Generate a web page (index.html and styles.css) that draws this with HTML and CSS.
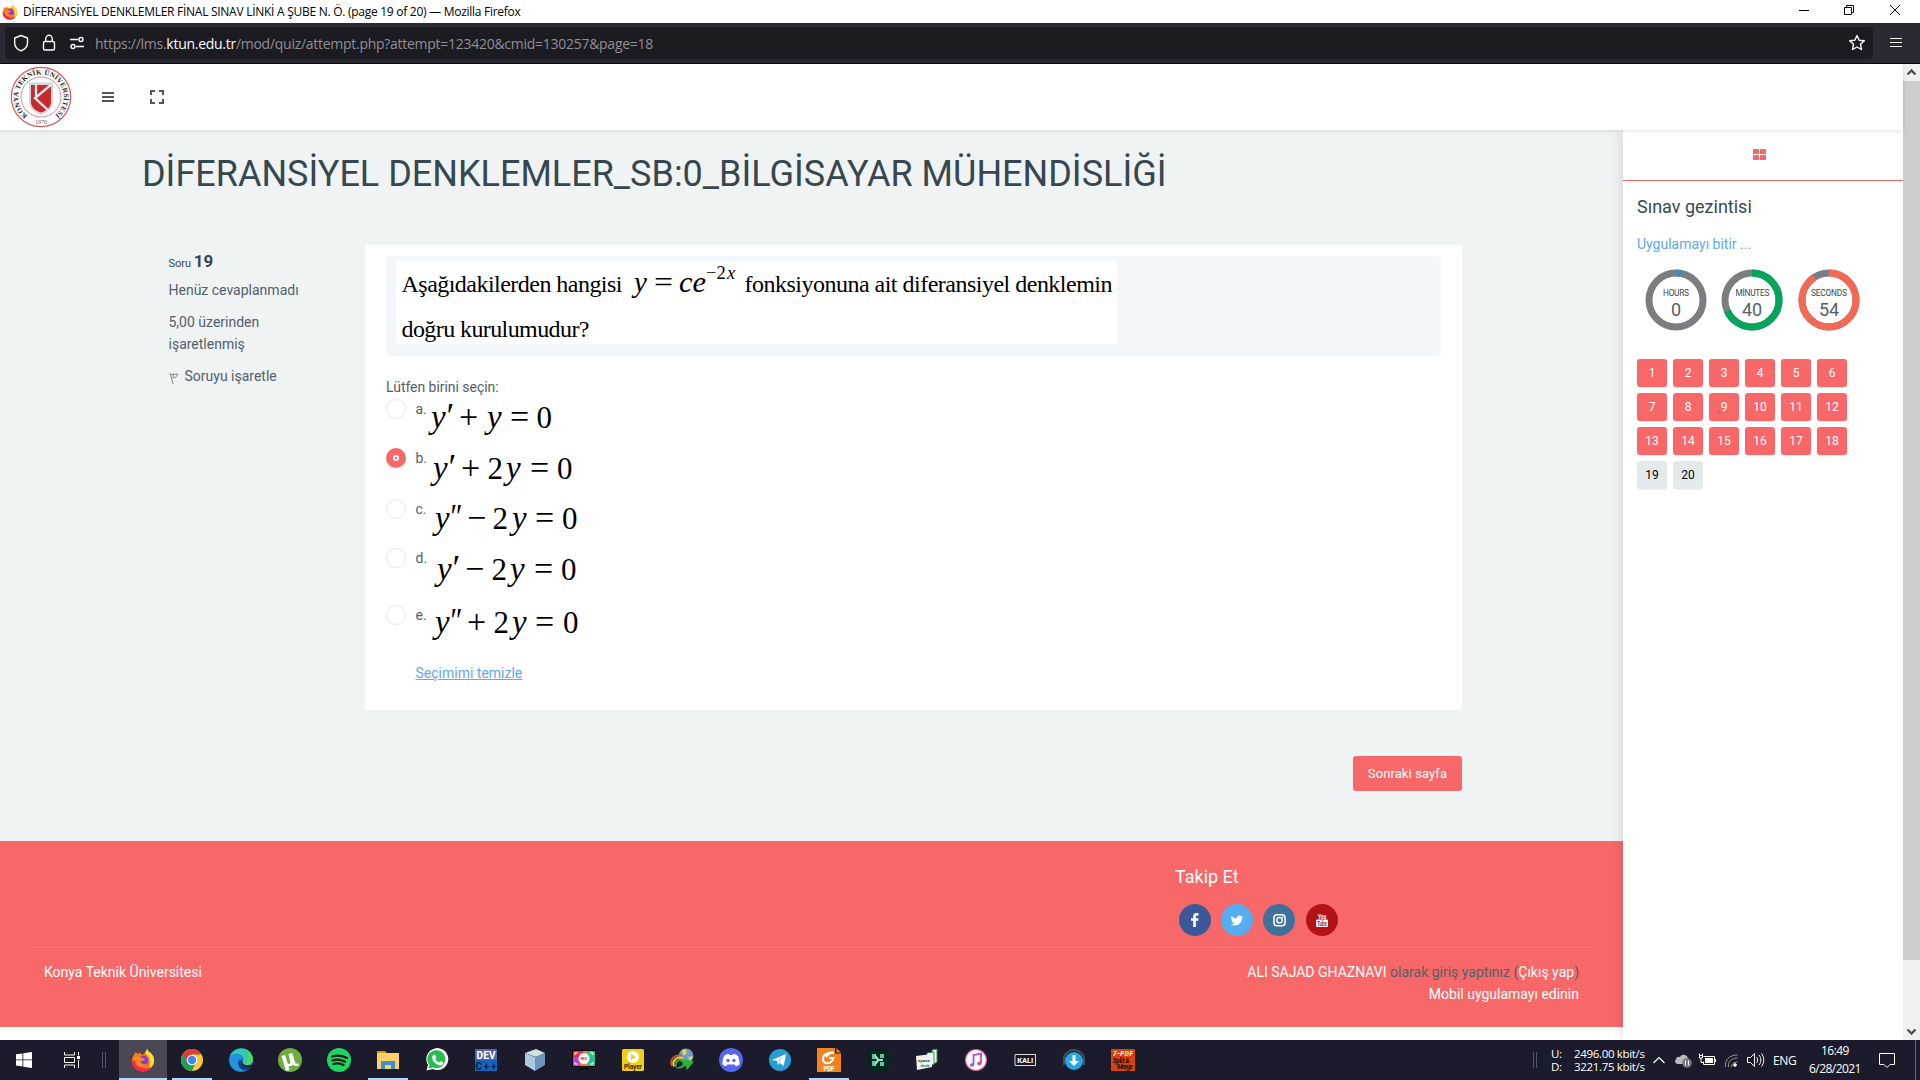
FILE: index.html
```html
<!DOCTYPE html>
<html lang="tr">
<head>
<meta charset="utf-8">
<title>DİFERANSİYEL DENKLEMLER FİNAL SINAV LİNKİ A ŞUBE N. Ö. (page 19 of 20)</title>
<link rel="stylesheet" href="styles.css">
</head>
<body>
<header class="titlebar">
  <svg class="fox" width="16" height="16" viewBox="0 0 24 24"><use href="#firefox"/></svg>
  <span class="window-title fit" data-w="497.500">DİFERANSİYEL DENKLEMLER FİNAL SINAV LİNKİ A ŞUBE N. Ö. (page 19 of 20) — Mozilla Firefox</span>
  <svg class="win-controls" width="102" height="12" viewBox="0 0 102 12" fill="none" stroke="#000"><path d="M0 6.500h10M45.500 3.500h7v7h-7zM47.500 3v-1.500h7v7h-1.500M91 1l10 10M101 1l-10 10"/></svg>
</header>
<nav class="navbar">
  <div class="urlbar">
    <svg width="70" height="20" viewBox="0 0 70 20" fill="none" stroke="#fbfbfe" stroke-width="1.4"><path d="M7 2.500L13.500 5v5c0 3.500-3 6.500-6.500 7.800C3.500 16.500.7 13.500.7 10V5z" stroke-linejoin="round"/><rect x="29.500" y="8.500" width="11" height="8.500" rx="1.500"/><path d="M31.700 8.500V6a3.300 3.700 0 0 1 6.600 0v2.500M56 6.500h8M62 13.500h8"/><circle cx="67" cy="6.500" r="2"/><circle cx="59" cy="13.500" r="2"/></svg>
    <span class="url fit" data-w="558">https://lms.<b>ktun.edu.tr</b>/mod/quiz/attempt.php?attempt=123420&amp;cmid=130257&amp;page=18</span>
    <svg class="star" width="18" height="18" viewBox="0 0 18 18" fill="none" stroke="#fbfbfe" stroke-width="1.400" stroke-linejoin="round"><path d="M9 1.500l2.200 4.700 5.100.6-3.800 3.500 1 5.200L9 13l-4.500 2.500 1-5.200L1.700 6.800l5.100-.6z"/></svg>
  </div>
  <svg class="menu" width="12" height="10" viewBox="0 0 12 10" stroke="#fbfbfe"><path d="M0 .5h12M0 4.500h12M0 8.500h12"/></svg>
</nav>
<div class="viewport">
  <div class="page">
    <header class="site-header">
      <svg class="logo" width="62" height="62" viewBox="0 0 62 62">
        <circle cx="31" cy="31" r="29.700" fill="#fff" stroke="#d4595f" stroke-width="1.200"/><circle cx="31" cy="31" r="20" fill="none" stroke="#dd8c90"/>
        <path id="ring" d="M17.500 49.500A22.800 22.800 0 1 1 44.500 49.500" fill="none"/>
        <text class="logo-text"><textPath href="#ring" textLength="113">KONYA TEKNİK ÜNİVERSİTESİ</textPath></text>
        <text class="logo-year" x="31" y="58" text-anchor="middle">1970</text>
        <path d="M19 16.500h24v19c0 7-5 11-12 13.500C24 46.500 19 42.500 19 35.500z" fill="#d5d6d8"/><path d="M21 19h20v16.500c0 6-4 9-10 11C25 44.500 21 41.500 21 35.500z" fill="#c52a31"/><path d="M42 18L25 32l14 13M26 19v13" fill="none" stroke="#e8e8ea" stroke-width="2.300"/>
      </svg>
      <svg width="12" height="10" viewBox="0 0 12 10" stroke="#555" stroke-width="1.800"><path d="M0 1h12M0 5h12M0 9h12"/></svg>
      <svg width="14" height="14" viewBox="0 0 14 14" fill="none" stroke="#555" stroke-width="2"><path d="M1 5V1h4M9 1h4v4M13 9v4H9M5 13H1V9"/></svg>
    </header>
    <div class="columns">
      <div class="content">
        <main>
          <h1><span class="fit" data-w="1024.500">DİFERANSİYEL DENKLEMLER_SB:0_BİLGİSAYAR MÜHENDİSLİĞİ</span></h1>
          <div class="question">
            <aside class="info">
              <h3>Soru <b>19</b></h3>
              <p>Henüz cevaplanmadı</p>
              <p>5,00 üzerinden işaretlenmiş</p>
              <p class="flag"><svg width="11" height="13" viewBox="0 0 11 13" fill="none" stroke="#888" stroke-width="1"><path d="M1 1l3 11M1.500 2.500l7.500-.5-2.500 3.500-3 .5M4 2.500v3"/></svg>Soruyu işaretle</p>
            </aside>
            <section class="card">
              <div class="formulation">
                <svg class="statement" width="721" height="83" viewBox="0 0 721 83">
                  <text x="5.500" y="31" textLength="221">Aşağıdakilerden hangisi</text>
                  <text class="math" y="31"><tspan x="238" class="it">y</tspan><tspan x="258" textLength="19" lengthAdjust="spacingAndGlyphs">=</tspan><tspan x="283" class="it" textLength="27" lengthAdjust="spacingAndGlyphs">ce</tspan></text>
                  <text class="sup" y="18"><tspan x="310">−2</tspan><tspan x="331" class="it">x</tspan></text>
                  <text x="348.500" y="31" textLength="368">fonksiyonuna ait diferansiyel denklemin</text>
                  <text x="5.500" y="76" textLength="188">doğru kurulumudur?</text>
                </svg>
              </div>
              <div class="prompt">Lütfen birini seçin:</div>
              <div class="options">
                <label class="option a"><i class="radio"></i><span>a.</span><svg width="160" height="48"><text y="28.500"><tspan x="2" class="it y">y</tspan><tspan x="17.500" class="prime">′</tspan><tspan x="30" class="op">+</tspan><tspan x="58" class="it y">y</tspan><tspan x="81" class="op">=</tspan><tspan x="107.500">0</tspan></text></svg></label>
                <label class="option b"><i class="radio on"></i><span>b.</span><svg width="160" height="48"><text y="30.500"><tspan x="4" class="it y">y</tspan><tspan x="19.500" class="prime">′</tspan><tspan x="32" class="op">+</tspan><tspan x="58.500">2</tspan><tspan x="77" class="it y">y</tspan><tspan x="101" class="op">=</tspan><tspan x="128">0</tspan></text></svg></label>
                <label class="option c"><i class="radio"></i><span>c.</span><svg width="160" height="48"><text y="29.500"><tspan x="6" class="it y">y</tspan><tspan x="21.500" class="prime" textLength="12" lengthAdjust="spacingAndGlyphs">″</tspan><tspan x="38" class="op">−</tspan><tspan x="63.500">2</tspan><tspan x="83" class="it y">y</tspan><tspan x="106" class="op">=</tspan><tspan x="133">0</tspan></text></svg></label>
                <label class="option d"><i class="radio"></i><span>d.</span><svg width="160" height="48"><text y="31.500"><tspan x="8" class="it y">y</tspan><tspan x="23.500" class="prime">′</tspan><tspan x="36" class="op">−</tspan><tspan x="62.500">2</tspan><tspan x="81" class="it y">y</tspan><tspan x="105" class="op">=</tspan><tspan x="132">0</tspan></text></svg></label>
                <label class="option e"><i class="radio"></i><span>e.</span><svg width="160" height="48"><text y="27.500"><tspan x="6" class="it y">y</tspan><tspan x="21.500" class="prime" textLength="12" lengthAdjust="spacingAndGlyphs">″</tspan><tspan x="38" class="op">+</tspan><tspan x="64.500">2</tspan><tspan x="83" class="it y">y</tspan><tspan x="106" class="op">=</tspan><tspan x="134">0</tspan></text></svg></label>
              </div>
              <a class="clear">Seçimimi temizle</a>
            </section>
          </div>
          <div class="actions"><button>Sonraki sayfa</button></div>
        </main>
        <footer>
          <div class="follow">
            <h4>Takip Et</h4>
            <div class="social">
              <svg viewBox="0 0 32 32"><circle cx="16" cy="16" r="16" fill="#3b5998"/><path d="M19.500 9.300v2.300h-1.400c-1 0-1.200.5-1.200 1.200v1.500h2.600l-.4 2.500h-2.200V23h-2.700v-6.200H12v-2.500h2.200v-1.900c0-2.200 1.400-3.400 3.300-3.400z" fill="#fff"/></svg>
              <svg viewBox="0 0 32 32"><circle cx="16" cy="16" r="16" fill="#55acee"/><path d="M22.200 12.600a6 6 0 0 1-1.200 1.200c.2 4.500-3.200 7.700-7.200 7.700-1.500 0-2.800-.4-3.900-1.100 1.300.1 2.500-.2 3.600-1-1.200 0-2.100-.8-2.400-1.800h1.100a2.600 2.600 0 0 1-2-2.600l1.100.3c-1.100-.8-1.500-2.300-.8-3.400a7.300 7.300 0 0 0 5.300 2.700c-.5-2.500 2.500-4.100 4.300-2.300l1.600-.6-1 1.400z" fill="#fff"/></svg>
              <svg viewBox="0 0 32 32"><circle cx="16" cy="16" r="16" fill="#3f729b"/><rect x="11" y="10.700" width="11" height="11" rx="3" fill="none" stroke="#fff" stroke-width="1.500"/><circle cx="16.500" cy="16.200" r="2.700" fill="none" stroke="#fff" stroke-width="1.400"/><circle cx="19.700" cy="13" r=".8" fill="#fff"/></svg>
              <svg class="yt" viewBox="0 0 32 32"><circle cx="16" cy="16" r="16" fill="#b31217"/><rect x="10" y="15.500" width="12" height="7.500" rx="1.300" fill="#fff"/><text x="16" y="14.500" text-anchor="middle" fill="#fff" textLength="8" lengthAdjust="spacingAndGlyphs">You</text><text x="16" y="22" text-anchor="middle" fill="#b31217" textLength="10" lengthAdjust="spacingAndGlyphs">Tube</text></svg>
            </div>
          </div>
          <div class="legal"><span>Konya Teknik Üniversitesi</span><div><b>ALI SAJAD GHAZNAVI</b> olarak giriş yaptınız (<b>Çıkış yap</b>)<br><b>Mobil uygulamayı edinin</b></div></div>
        </footer>
      </div>
      <aside class="drawer">
        <div class="tab"><svg width="13" height="11" viewBox="0 0 13 11" fill="#f96868"><rect width="6" height="5" rx=".6"/><rect x="7" width="6" height="5" rx=".6"/><rect y="6" width="6" height="5" rx=".6"/><rect x="7" y="6" width="6" height="5" rx=".6"/></svg></div>
        <h2>Sınav gezintisi</h2>
        <a class="finish">Uygulamayı bitir ...</a>
        <div class="timers">
          <svg viewBox="0 0 62 62"><circle class="track" cx="31" cy="31" r="27"/><circle class="arc hours" cx="31" cy="31" r="27" pathLength="60" stroke-dasharray="1.700 60"/><text class="unit" x="31" y="26.500" textLength="26">HOURS</text><text class="num" x="31" y="47">0</text></svg>
          <svg viewBox="0 0 62 62"><circle class="track" cx="31" cy="31" r="27"/><circle class="arc minutes" cx="31" cy="31" r="27" pathLength="60" stroke-dasharray="41 60"/><text class="unit" x="31.500" y="26.500" textLength="34">MİNUTES</text><text class="num" x="31" y="47">40</text></svg>
          <svg viewBox="0 0 62 62"><circle class="track" cx="31" cy="31" r="27"/><circle class="arc seconds" cx="31" cy="31" r="27" pathLength="60" stroke-dasharray="54.500 60"/><text class="unit" x="31" y="26.500" textLength="36">SECONDS</text><text class="num" x="31" y="47">54</text></svg>
        </div>
        <div class="pages"><i>1</i><i>2</i><i>3</i><i>4</i><i>5</i><i>6</i><i>7</i><i>8</i><i>9</i><i>10</i><i>11</i><i>12</i><i>13</i><i>14</i><i>15</i><i>16</i><i>17</i><i>18</i><i class="open">19</i><i class="open">20</i></div>
      </aside>
    </div>
  </div>
  <div class="scrollbar">
    <svg width="17" height="17" viewBox="0 0 17 17" fill="none" stroke="#505050" stroke-width="2.400"><path d="M4.500 10.500l4-4 4 4"/></svg>
    <div class="thumb"></div>
    <svg width="17" height="17" viewBox="0 0 17 17" fill="none" stroke="#505050" stroke-width="2.400"><path d="M4.500 6.500l4 4 4-4"/></svg>
  </div>
</div>
<footer class="taskbar">
  <div class="system">
    <svg width="16" height="16" viewBox="0 0 16 16" fill="#fff"><path d="M0 2.300L6.500 1.400v6.100H0zM7.300 1.300L16 0v7.500H7.300zM0 8.300h6.500v6.200L0 13.600zM7.300 8.300H16V16l-8.700-1.200z"/></svg>
    <svg width="16" height="16" viewBox="0 0 16 16" fill="none" stroke="#fff"><path d="M.5 0v3h10V0M.5 16v-3h10v3M.5 5.500h10v5H.5zM14.500 0v3.500M14.500 8v8"/><path d="M13 4h3v3h-3z" fill="#fff" stroke="none"/></svg>
    <i class="grip"></i>
  </div>
  <div class="apps">
    <span class="app active"><svg viewBox="0 0 24 24"><g id="firefox"><path d="M3 7l1.500-3L7 6l2-2 1 2.500c1 0 3-.5 4-1.500L16 1l2 3c4 2 5.500 6 5 10-.7 5-5 9.500-11 9.500S1 19 1 13c0-2 .7-4.500 2-6z" fill="#ff7a18"/><path d="M14 5l2-4 2 3c4 2 5.500 6 5 10-.5 3-3 6-5 6.500 2-6 1-12-4-15.500z" fill="#ffdc30"/><path d="M1 14c.5 6 5.500 9.500 11 9.500 4 0 7-2 9-5-5 3-9 2-11 1-4-1-6-4-6-8z" fill="#f9264f"/><circle cx="12.500" cy="12.500" r="5" fill="#8a3bd8"/><path d="M3 10c3-2 6-1 8 0l3 1c-1 2-3 2-5 2 1 3 4 4 7 3-3 4-11 3-12-3z" fill="#ff8a1c"/></g></svg></span>
    <span class="app running"><svg viewBox="0 0 24 24"><circle cx="12" cy="12" r="11" fill="#fcc934"/><path d="M2.500 6.500A11 11 0 0 1 21.500 6.500H12L6.700 14z" fill="#d93f35"/><path d="M2.500 6.500l5.300 8.600a5 5 0 0 0 7.800 0L12 23A11 11 0 0 1 2.500 6.500z" fill="#1e9e57"/><circle cx="12" cy="12" r="5.300" fill="#fff"/><circle cx="12" cy="12" r="4.200" fill="#4285f4"/></svg></span>
    <span class="app"><svg viewBox="0 0 24 24"><circle cx="12" cy="12" r="12" fill="#1177cc"/><path d="M1 8C5-2 22-3 24 11c0 5-4 6-7 6-3 0-4-2-3-4 2-5-5-10-13-5z" fill="#35c8b0"/><path d="M17 1.500c4 2 7 6 7 10 0 4-4 5.500-7 5.500l-2-1c5-2 5-9 2-14.500z" fill="#52d85a"/><path d="M1 9c4-5 12-3 13 3-2-3-6-1-5 4 1 3 3 5 6 7C6 25-2 17 1 9z" fill="#2395e0"/><path d="M14 11c-4 0-4 10 8 8-3 3-7 4-10 2-4-3-3-9 2-10z" fill="#123f78"/><path d="M13.500 12c-1.500 3 2 7 9.500 5l-1 2c-8 2-12-4-8.500-7z" fill="#1b1b2b"/></svg></span>
    <span class="app"><svg viewBox="0 0 24 24"><circle cx="12" cy="12" r="12" fill="#70ad41"/><path d="M3.500 8l3.500-1 2.500 8c.5 1.500 3.500 1 3-.5L10.500 6l3.700-1 3 9.500c.3 1 1.500 1.500 3 1l.7 1.700c-2 1.500-4.500 1-5.500-.7-1.500 1.700-3.500 2-5 1.500L11.500 22 8 23z" fill="#fff"/></svg></span>
    <span class="app"><svg viewBox="0 0 24 24"><circle cx="12" cy="12" r="12" fill="#1ed760"/><path d="M5 8.500c5-1.500 10-1 15 1.500M5.500 12.500c4.500-1.500 8.500-1 12.500 1.300M6.500 16c4-1 7-.7 10 1" fill="none" stroke="#111b18" stroke-width="2.200" stroke-linecap="round"/></svg></span>
    <span class="app running"><svg viewBox="0 0 24 24"><path d="M1 3h8l2 2H1z" fill="#d99a0a"/><path d="M1 5h22v16H1z" fill="#fcd268"/><path d="M5 21v-8h14v8h-4v-4H9v4z" fill="#3c91d4"/></svg></span>
    <span class="app"><svg viewBox="0 0 24 24"><path d="M1.500 22.500L3 17A11 11 0 1 1 7.500 21z" fill="#fff"/><path d="M3.500 20.500L4.500 17A9 9 0 1 1 8 19.500z" fill="#27bd4e"/><path d="M8 7l2-.5 1.300 3-1 1.500c1 2 2 2.800 4 3.500l1.200-1.500 3 1.500c-.5 3-3 3.500-5 2.500-4-1.500-8-6-5.500-10z" fill="#fff"/></svg></span>
    <span class="app"><svg viewBox="0 0 24 24"><path d="M1 1h22v11H1z" fill="#53679e"/><path d="M1 12h22v11H1z" fill="#1761b8"/><text x="12" y="11" textLength="19" fill="#fff">DEV</text><text x="12" y="21.500" textLength="21" fill="#07234e">C++</text></svg></span>
    <span class="app"><svg viewBox="0 0 24 24"><path d="M2 5l11-4 9 4-9 4z" fill="#cfe4e1"/><path d="M2 5l10 4v14L2 17z" fill="#adc8df"/><path d="M22 5L12 9v14l10-6z" fill="#6f93bd"/></svg></span>
    <span class="app"><svg viewBox="0 0 24 24"><path d="M0 2h24v17H0zM8 20h8v1.500H6z" fill="#050505"/><path d="M1 3h7v15H1z" fill="#c23ae0"/><path d="M8 3h8v15H8z" fill="#ff7920"/><path d="M16 3h7v15h-7z" fill="#1fc58c"/><path d="M1 3h10v7H1z" fill="#f02a49"/><circle cx="12" cy="10.500" r="5.500" fill="#fff"/><path d="M3 7V5h3M18 5h3v2M3 14v2h3M18 16h3v-2" fill="none" stroke="#fff"/><text x="12" y="12" class="tiny" fill="#e32" textLength="7">REC</text></svg></span>
    <span class="app"><svg viewBox="0 0 24 24"><rect x="1" y="1" width="22" height="22" rx="1.500" fill="#f2cf13"/><circle cx="12" cy="9" r="6" fill="#fff"/><path d="M10 6l5 3-5 3z" fill="#f2cf13"/><text x="12" y="21" class="small" fill="#352c00" textLength="18">Player</text></svg></span>
    <span class="app"><svg viewBox="0 0 24 24"><circle cx="16" cy="8" r="7.500" fill="#7499c8"/><path d="M12 2c4-2 6 1 4 4s-4 0-4-4zM18 9l5-1-3 5z" fill="#e0d65c"/><path d="M2 18C-1 11 5 6 12 8" fill="none" stroke="#d64830" stroke-width="2"/><path d="M4 18.500C1.500 12 7 8.500 13 10" fill="none" stroke="#f3d51f" stroke-width="2"/><path d="M6 18.500C4 14 8 11 12.500 12" fill="none" stroke="#25b62d" stroke-width="2"/><path d="M10 11l14 2.500-7 8.500-1.500-4.500c-3 3-7 4-10.500 2 4 0 7-1.500 8-3.500z" fill="#25b62d"/></svg></span>
    <span class="app"><svg viewBox="0 0 24 24"><circle cx="12" cy="12" r="12" fill="#5865f2"/><path d="M5 8c2-1.500 3-2 5-2l.5 1h3L14 6c2 0 3 .5 5 2 1 3 2 6 1.500 8.500C19 17.500 18 18 16.500 18l-1-1.500h-7L7.500 18C6 18 5 17.500 3.500 16.500 3 14 4 11 5 8z" fill="#fff"/><circle cx="9" cy="12.500" r="1.700" fill="#5865f2"/><circle cx="15" cy="12.500" r="1.700" fill="#5865f2"/></svg></span>
    <span class="app"><svg viewBox="0 0 24 24"><circle cx="12" cy="12" r="11" fill="#279fd5"/><path d="M4 12l14-6-2.300 12-4-3-2 2-.5-4-5-1z" fill="#fff"/><path d="M9.500 13l6-4.500-4.500 6-1.500 2.500z" fill="#b6d5e8"/></svg></span>
    <span class="app running"><svg viewBox="0 0 24 24"><path d="M0 0h18v5.500h6V24H0z" fill="#f58220"/><path d="M19.500 0L24 4.500h-4.500z" fill="#f58220"/><path d="M17 4.500c-7-.5-11 2-11 6.500 0 5 6 5.500 9 2l1.500-3H12M9 9c2-3.500 5-4.500 8-4.500" fill="none" stroke="#fff" stroke-width="2"/><text x="12" y="22.500" class="small" fill="#fff" textLength="11">PDF</text></svg></span>
    <span class="app"><svg viewBox="0 0 24 24"><rect x="1" y="1" width="22" height="22" rx="4" fill="#02261e"/><path d="M6 6h4v5H6zM14 6h4v4h-4zM6 13h4v5H6zM14 14h4v4h-4z" fill="#5cc8a4"/><path d="M9 6l4 5h4v2h-4l-4 5v-3l2-3-2-3z" fill="#9aeac9"/></svg></span>
    <span class="app"><svg viewBox="0 0 24 24"><path d="M17 2l5-1v13l-5 3z" fill="#fff" stroke="#238b3c"/><path d="M12 5l7-1v12l-7 3z" fill="#fff" stroke="#238b3c"/><path d="M1 8l16-2v13L2 22z" fill="#f1f1ed"/><text x="9" y="14" class="tiny" textLength="12" fill="#333">space</text><text x="10" y="19" class="tiny" textLength="9" fill="#22903b">desk</text></svg></span>
    <span class="app"><svg viewBox="0 0 24 24"><circle cx="12" cy="12" r="10.500" fill="#fff" stroke="#dc5ba4" stroke-width="1.200"/><path d="M9.500 16.500V7l7.500-1.500V15" fill="none" stroke="#b44cd0" stroke-width="1.800"/><ellipse cx="8" cy="17" rx="2.200" ry="1.800" fill="#6c70e5"/><ellipse cx="15.300" cy="15.500" rx="2.200" ry="1.800" fill="#e8456d"/></svg></span>
    <span class="app"><svg viewBox="0 0 24 24"><path d="M2 17.500h20.500v-11h-20.500z" fill="none" stroke="#ddd"/><text x="12.300" y="14.700" class="kali" fill="#fff" textLength="16">KALI</text></svg></span>
    <span class="app"><svg viewBox="0 0 24 24"><path d="M2 17V11a10 9 0 0 1 20 0v6" fill="none" stroke="#49505b" stroke-width="2"/><circle cx="12" cy="13" r="9" fill="#28a5e4"/><path d="M10.500 7h3v6H17l-5 5-5-5h3.500z" fill="#fff"/></svg></span>
    <span class="app"><svg viewBox="0 0 24 24"><path d="M0 1h24v22H0z" fill="#dc410b"/><text x="12" y="7.500" class="small it" textLength="20" fill="#fff">7-PDF</text><text x="10" y="15" class="small it" textLength="17" fill="#111">Split &amp;</text><text x="14" y="21" class="small it" textLength="16" fill="#111">Merge</text></svg></span>
  </div>
  <div class="tray">
    <i class="grip"></i>
    <div class="net"><span>U:</span><span>2496.00 kbit/s</span><span>D:</span><span>3221.75 kbit/s</span></div>
    <svg class="tray-icons" width="112" height="20" viewBox="0 0 112 20" fill="none" stroke="#fff"><path d="M.5 13L6 7.500l5.500 5.500" stroke-width="1.200"/><path d="M24 14a3 3 0 0 1-1-5 3 3 0 0 1 4-2c2-4 8-2 8 2 3 0 4 5 1 5z" fill="#b8bac0" stroke="none"/><circle cx="34" cy="13" r="4.800" fill="#77777b" stroke="none"/><path d="M32.500 10.500v5M35.500 10.500v5"/><path d="M50.500 6.500h11v8h-11v-3M62.500 9v3"/><path d="M52 8h8v5h-8z" fill="#fff" stroke="none"/><path d="M46.500 5.500h3v2.500h-3zM46.500 3.500v2M49.500 3.500v2M48 8v4.500h2.500"/><path d="M72.500 17c-1-7 4-12 12-12M75.500 17c-1-5 3-9 9-9M78.500 17c0-3 2-5 6-5" stroke="#999"/><circle cx="82" cy="15" r="1.300" fill="#fff"/><path d="M94.500 7.500h3l4-4v13l-4-4h-3zM103.500 7c1.500 2 1.500 4 0 6M106 5c2.500 3 2.500 7 0 10M108.500 3.500c3 4 3 9 0 13"/></svg>
    <span class="lang">ENG</span>
    <div class="clock">16:49<br>6/28/2021</div>
    <svg class="note" width="16" height="17" viewBox="0 0 16 17" fill="none" stroke="#fff"><path d="M.5 1.500h15v11H11l-3 3-3-3H.5z"/></svg>
    <i class="peek"></i>
  </div>
</footer>
<script src="fit.js"></script>
</body>
</html>
```
FILE: fit.js
```js
// Spread the tracking of single-line labels so they fill their intended measure.
document.querySelectorAll('.fit').forEach(function (el) {
  var gap = (Number(el.dataset.w) - el.getBoundingClientRect().width) / el.textContent.length;
  el.style.letterSpacing = gap + 'px';
});
```
FILE: styles.css
```css
* { box-sizing: border-box; }
body { margin: 0; width: 1920px; height: 1080px; overflow: hidden; display: flex; flex-direction: column; background: #fff; font-family: Roboto, sans-serif; font-size: 14px; color: #526069; }
svg { flex: none; display: block; }
h1, h2, h3, h4, p { margin: 0; font-weight: 400; }
.fit { white-space: nowrap; }
.it { font-style: italic; }

.titlebar { height: 23px; flex: none; display: flex; align-items: center; padding: 0 19px 0 2px; color: #000; font: 12px "Open Sans", sans-serif; }
.window-title { margin-left: 5px; }
.win-controls { margin: -3px 0 0 auto; }
.navbar { height: 41px; flex: none; display: flex; padding: 4px 18px 4px 5px; background: #2b2a33; border-bottom: 1px solid #0c0c0d; }
.urlbar { width: 1868px; height: 32px; display: flex; align-items: center; padding: 0 7px 0 9px; border-radius: 4px; background: #1c1b22; }
.url { margin-left: 11px; padding-top: 1px; font: 14px "Open Sans", sans-serif; color: #8f8f98; }
.url b { font-weight: 400; color: #fbfbfe; }
.star { margin-left: auto; }
.menu { margin: 11px 0 0 auto; }

.viewport { height: 976px; flex: none; display: flex; }
.page { width: 1903px; }
.site-header { height: 66px; display: flex; align-items: center; padding-left: 10px; background: #fff; position: relative; z-index: 1; box-shadow: 0 1px 5px rgba(0, 0, 0, .12); }
.logo { margin-right: 30px; }
.site-header svg:last-child { margin-left: 36px; }
.logo-text { font: bold 7px "Liberation Serif", serif; fill: #222; }
.logo-year { font: 6px "Liberation Serif", serif; fill: #555; }
.columns { display: flex; height: 910px; }
.content { width: 1623px; }
main { height: 711px; background: #eff3f4; padding: 20px 161px 0 141px; }
h1 { margin-left: 1px; font-size: 36px; line-height: 48px; color: #37474f; }
.question { display: flex; margin-top: 47px; }
.info { width: 224px; padding: 5px 64px 0 27.500px; line-height: 22px; }
.info h3 { font-size: 11px; line-height: 22px; color: #37474f; }
.info h3 b { font-size: 17px; }
.info p { margin-bottom: 10px; }
.info h3 + p { margin-top: 4px; }
.flag { display: flex; align-items: center; gap: 5px; }
.flag svg { margin-top: 4px; }
.card { width: 1097px; height: 465px; background: #fff; padding: 11px 21px 0; }
.formulation { height: 100px; padding: 5px 10px; border-radius: 4px; background: #f3f7f9; }
.statement { background: #fff; font: 24px "Liberation Serif", serif; fill: #000; }
.math { font-size: 29px; }
.sup { font-size: 18.500px; }
.prompt { margin-top: 20px; height: 22px; line-height: 22px; letter-spacing: -.04px; }
.options { padding-top: 1px; }
.option { display: flex; height: 50px; }
.a { height: 49px; }
.b { height: 51px; }
.c { height: 49px; }
.d { height: 57px; }
.option span { width: 13.500px; margin-left: 9.500px; line-height: 20px; white-space: nowrap; }
.option svg { overflow: visible; font: 31px "Liberation Serif", serif; fill: #000; }
.option .y { font-size: 33px; }
.option .op { font-size: 34px; }
.option .prime { font-size: 36px; }
.radio { width: 20px; height: 20px; border: 1px solid #e4eaec; border-radius: 50%; }
.radio.on { border: 7px solid #f96868; background: radial-gradient(circle, #f96868 1px, #fff 1.500px); background-clip: padding-box; }
.clear { display: block; margin: 7px 0 0 29.500px; line-height: 22px; color: #62a8ea; text-decoration: underline; }
.actions { display: flex; justify-content: flex-end; padding-top: 46px; }
button { width: 109px; height: 35px; padding: 0; border: 0; border-radius: 3px; background: #f96868; color: #fff; font: 400 13px Roboto, sans-serif; letter-spacing: .1px; }
.content footer { height: 186px; padding: 24px 29px 0 30px; background: #f96868; color: #fff; }
.follow { height: 83px; padding-left: 1145px; border-bottom: 1px solid #fa7e7e; }
h4 { font-size: 18px; line-height: 24px; }
.social { display: flex; gap: 10px; padding: 15px 0 0 4px; }
.social svg { width: 32px; height: 32px; }
.yt { margin-left: 1px; font: bold 7px Roboto, sans-serif; }
.legal { display: flex; justify-content: space-between; padding: 13px 15px 13px 14px; line-height: 22px; }
.legal div { color: #526069; text-align: right; }
.legal b { color: #fff; font-weight: 400; }

.drawer { width: 280px; background: #fff; box-shadow: 0 0 12px rgba(0, 0, 0, .15); clip-path: inset(0 0 0 -14px); }
.tab { height: 51px; border-bottom: 1px solid #f96868; padding: 19px 0 0 130px; }
h2 { margin: 13px 14px 0; font-size: 18px; line-height: 26px; color: #37474f; }
.finish { display: block; margin: 13px 14px 0; line-height: 22px; color: #62a8ea; }
.timers { display: flex; gap: 14.500px; margin: 14px 0 0 21.500px; }
.timers svg { width: 62px; height: 62px; }
.timers text { text-anchor: middle; }
.track, .arc { fill: none; stroke: #7b7d81; stroke-width: 7; }
.arc { transform: rotate(-90deg); transform-origin: 31px 31px; }
.hours { stroke: #3c8dbc; }
.minutes { stroke: #00a65a; }
.seconds { stroke: #f56954; }
.unit { font-size: 8.300px; fill: #37474f; }
.num { font-size: 18px; fill: #526069; }
.pages { display: grid; grid-template-columns: repeat(6, 30px); gap: 6px; margin: 28px 0 0 14px; }
.pages i { height: 28px; border-radius: 3px; background: #f96868; color: #fff; text-align: center; font: 400 12px/28px Roboto, sans-serif; box-shadow: 0 1px 1px rgba(0, 0, 0, .06); }
.pages .open { background: #e4eaec; color: #000; }
.scrollbar { width: 17px; background: #f0f0f0; display: flex; flex-direction: column; }
.thumb { height: 879px; background: #cdcdcd; margin-bottom: auto; }

.taskbar { height: 40px; display: flex; background: #1b1b2b; color: #fff; }
.system { width: 117px; display: flex; align-items: center; padding-left: 16px; }
.system svg + svg { margin-left: 32px; }
.grip { width: 4px; height: 16px; border: solid #55555f; border-width: 0 1px; }
.system .grip { margin-left: 22px; }
.apps { display: flex; }
.app { width: 49px; height: 40px; padding-top: 8px; border: solid transparent; border-width: 0 5px 0 4px; background-clip: padding-box; }
.app svg { width: 24px; height: 24px; margin: auto; font: bold 10px Roboto, sans-serif; }
.app text { text-anchor: middle; }
.app .small { font-size: 6.500px; }
.app .tiny { font-size: 4px; }
.app .kali { font-size: 7.500px; }
.running { background: linear-gradient(#a9dcfa, #a9dcfa) bottom / 100% 2px no-repeat; background-origin: padding-box; }
.active { border: 0; border-right: 1px solid #1b1b2b; margin-left: 2px; width: 49px; background: linear-gradient(#a9dcfa, #a9dcfa) bottom / 100% 2px no-repeat, #494854; }
.tray { margin-left: auto; display: flex; align-items: center; font: 12px "Open Sans", sans-serif; }
.net { display: grid; grid-template-columns: 23px 73px; margin-left: 14px; line-height: 13px; font-size: 11.500px; letter-spacing: -.33px; white-space: nowrap; }
.tray-icons { margin-left: 6px; }
.lang { width: 24px; margin-left: 8px; letter-spacing: -.4px; }
.clock { width: 66px; margin-left: 5px; margin-right: 1px; line-height: 18px; text-align: center; letter-spacing: -.55px; }
.note { margin-left: 10px; }
.peek { width: 1px; height: 40px; margin: 0 4px 0 20px; background: #666672; }
```
